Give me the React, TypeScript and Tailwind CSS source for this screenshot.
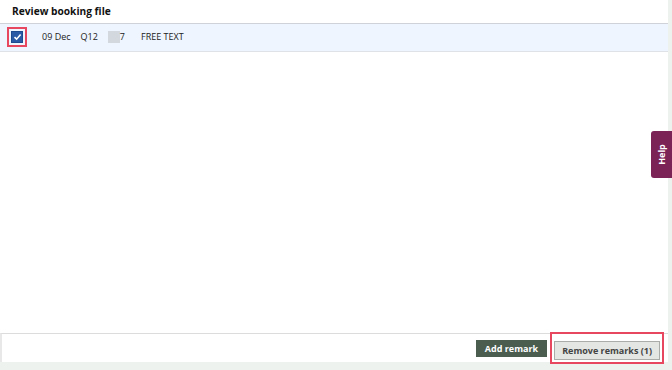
export default function App() {
  return (
    <div className="relative w-[672px] h-[370px] bg-[#eef2ef] flex" style={{ fontFamily: '"Open Sans", "Liberation Sans", sans-serif' }}>
      <div className="w-[668px] h-[362px] bg-white flex flex-col">
        <div className="h-[24px] border-b border-[#cfd2d8] flex items-center pl-[12px]">
          <h1 className="text-[10.2px] font-bold text-[#111] leading-none">Review booking file</h1>
        </div>
        <div className="h-[28px] bg-[#eef5fe] border-b border-[#dfe3e8] flex items-center text-[9px] text-[#222] pb-[1px]">
          <div className="ml-[7px] w-[20px] h-[20px] border-2 border-[#e8485f] flex items-center justify-center">
            <div className="w-[12px] h-[12px] bg-[#2a5aa6] border border-[#1e4a90] flex items-center justify-center">
              <svg width="9" height="8" viewBox="0 0 9 8">
                <path d="M1.5 4.2 L3.6 6.2 L7.6 1.6" fill="none" stroke="white" strokeWidth="1.6" />
              </svg>
            </div>
          </div>
          <span className="ml-[15px]">09 Dec</span>
          <span className="ml-[10px]">Q12</span>
          <span className="ml-[10px] w-[12px] h-[12px] bg-[#d3d7de]" />
          <span>7</span>
          <span className="ml-[16px]">FREE TEXT</span>
        </div>
        <div className="flex-1" />
        <div className="h-[29px] border-t border-[#dcdcdc] border-l-2 border-l-[#e8e8e8] flex items-center justify-end pr-[4px] gap-[3px]">
          <button className="h-[17px] px-[9px] bg-[#4a5d4f] text-white text-[9px] font-bold leading-none">Add remark</button>
          <div className="border-2 border-[#e8485f] p-[2px]">
            <button className="h-[19px] px-[7px] bg-[#e3e6e3] border border-[#a9aca9] text-[#444] text-[9px] font-bold leading-none">Remove remarks (1)</button>
          </div>
        </div>
      </div>
      <div className="absolute right-0 top-[131px] w-[21px] h-[47px] bg-[#7b2257] rounded-l-[3px] flex items-center justify-center">
        <span className="text-white text-[9px] font-bold -rotate-90 leading-none">Help</span>
      </div>
    </div>
  );
}
